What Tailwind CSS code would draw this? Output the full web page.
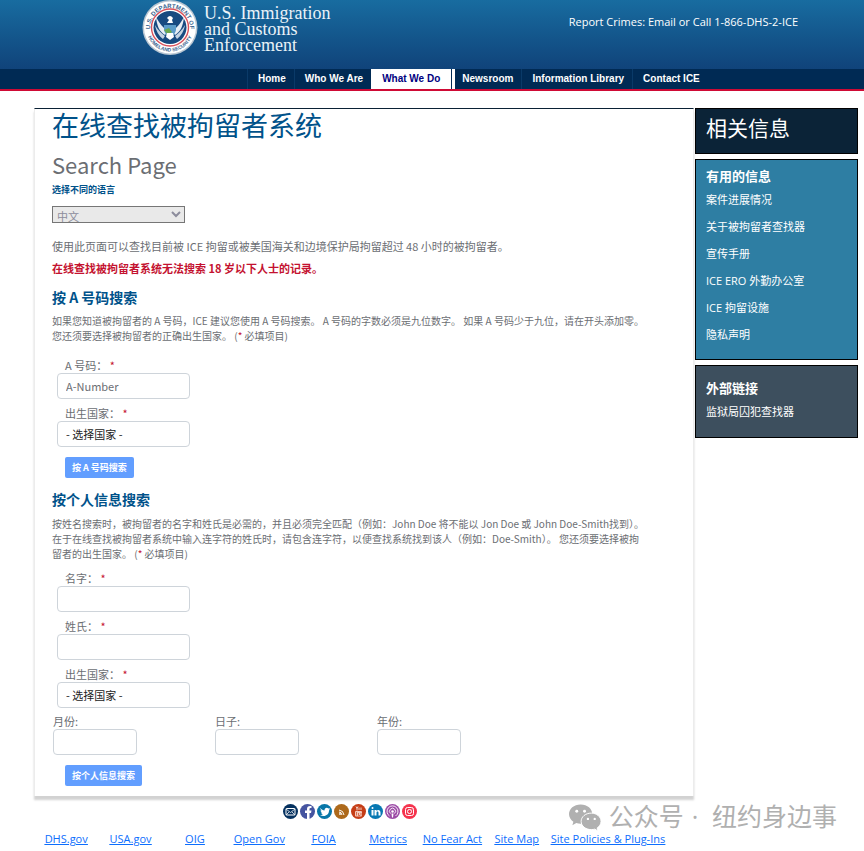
<!DOCTYPE html>
<html lang="zh">
<head>
    <meta charset="UTF-8">
    <meta name="viewport" content="width=device-width, initial-scale=1.0">
    <title>在线查找被拘留者系统</title>
    <script src="https://cdn.jsdelivr.net/npm/@tailwindcss/browser@4"></script>
</head>
<body class="relative min-h-screen bg-white font-['Noto_Sans_CJK_SC',sans-serif] text-[11px] leading-4 text-[#6b6e73]">
    <!-- Header -->
    <header>
        <div class="flex h-[69px] items-start justify-between bg-linear-to-b from-[#186ca0] to-[#10437a] pr-[66px] pl-[142px] text-white">
            <a href="#" class="flex items-start gap-[6px]">
                <svg class="h-14 w-14" viewBox="0 0 56 56" aria-label="DHS">
                    <defs>
                        <path id="seal-top" d="M8.5 32.5A20 20 0 1 1 47.5 32.5"/>
                        <path id="seal-bottom" d="M4.6 31A23.6 23.6 0 0 0 51.4 31"/>
                    </defs>
                    <circle cx="28" cy="27.500" r="27.500" fill="#b9c6d2"/>
                    <circle cx="28" cy="27.500" r="26" fill="#fff"/>
                    <text font-family="Liberation Sans" font-size="6" font-weight="bold" fill="#3c6590"><textPath href="#seal-top" startOffset="50%" text-anchor="middle">U.S. DEPARTMENT OF</textPath></text>
                    <text font-family="Liberation Sans" font-size="5" font-weight="bold" fill="#3c6590"><textPath href="#seal-bottom" startOffset="50%" text-anchor="middle">HOMELAND SECURITY</textPath></text>
                    <circle cx="28" cy="27.500" r="18.500" fill="#fff" stroke="#d8515c" stroke-width="1.400"/>
                    <circle cx="28" cy="27.500" r="16.500" fill="#174a80"/>
                    <!-- Eagle -->
                    <path d="M14 17c1 9 3 14 9 18l3-4c-5-3-8-7-12-14zM42 17c-1 9-3 14-9 18l-3-4c5-3 8-7 12-14z" fill="#e8eef4"/>
                    <path d="M13 25c1 6 4 11 8 14l2-3c-4-3-7-6-10-11zM43 25c-1 6-4 11-8 14l-2-3c4-3 7-6 10-11z" fill="#c4d3e1"/>
                    <path d="M25 18q3-4 6 0l-1 2 1 3h-6l2-3z" fill="#fff"/>
                    <path d="M22 25h12v5q-1 5-6 8-5-3-6-8z" fill="#5b9bc8"/>
                    <path d="M22 30l5-2 3 4-4 3z" fill="#6aa84f"/>
                    <path d="M25 33h6l1 4-4 3-4-3z" fill="#fff"/>
                </svg>
                <span class="pt-[5px] font-['Liberation_Serif',serif] text-[18px] leading-4 text-[#eaf2f8]">U.S. Immigration<br>and Customs<br>Enforcement</span>
            </a>
            <p class="pt-[14px] font-['Open_Sans',sans-serif] text-[11px]"><span>Report Crimes:</span> <a href="#">Email</a> or <a href="#">Call 1-866-DHS-2-ICE</a></p>
        </div>
        <nav class="flex h-[22px] border-b-2 border-[#cf0a35] bg-[#002a54] pl-[247px] font-['Liberation_Sans',sans-serif] text-[10px] leading-[19px] font-bold text-white">
            <a href="#" class="border-l border-[#0a3a68] pr-2 pl-[10px]">Home</a>
            <a href="#" class="border-l border-[#0a3a68] pr-2 pl-[10px]">Who We Are</a>
            <a href="#" class="border-r border-[#002a54] bg-white px-[11px] text-[#000080]">What We Do</a>
            <a href="#" class="border-l-3 border-white pr-2 pl-[7px]">Newsroom</a>
            <a href="#" class="border-l border-[#0a3a68] pr-2 pl-[10px]">Information Library</a>
            <a href="#" class="border-l border-[#0a3a68] pr-2 pl-[10px]">Contact ICE</a>
        </nav>
    </header>

    <div class="mt-[17px] flex items-start gap-px pr-[6px] pl-[34px]">
        <!-- Search forms -->
        <main class="min-w-0 flex-1 border-x border-t border-x-[#ececec] border-t-[#0a2135] pb-[10px] pl-[17px] shadow-[0_4px_2px_#d2d2d2]">
            <h1 class="text-[27px] leading-8 text-[#00528a]">在线查找被拘留者系统</h1>
            <h2 class="mt-[7px] text-[22px] leading-8 text-[#6b6e73]">Search Page</h2>
            <label for="language" class="mt-1 block text-[9px] leading-3 font-bold text-[#00528a]">选择不同的语言</label>
            <select id="language" class="mt-[10px] block h-[17px] w-[133px] border border-[#767676] bg-[#e9e9e9] text-[11px] leading-[15px] text-[#8c8c9c]">
                <option>中文</option>
            </select>
            <p class="mt-[15px]">使用此页面可以查找目前被 ICE 拘留或被美国海关和边境保护局拘留超过 48 小时的被拘留者。</p>
            <p class="mt-[6px] font-bold text-[#c41230]">在线查找被拘留者系统无法搜索 18 岁以下人士的记录。</p>

            <form>
                <h3 class="mt-[11px] text-sm leading-5 font-bold text-[#00528a]">按 A 号码搜索</h3>
                <p class="mt-[6px] text-[10px] leading-[15px]">如果您知道被拘留者的 A 号码，ICE 建议您使用 A 号码搜索。 A 号码的字数必须是九位数字。 如果 A 号码少于九位，请在开头添加零。<br>您还须要选择被拘留者的正确出生国家。 (<span class="text-[#c41230]">*</span> 必填项目)</p>
                <div class="mt-[14px] flex flex-col items-start gap-[6px] pl-[5px]">
                    <div>
                        <label for="a-number" class="block pl-2">A 号码： <span class="text-[#c41230]">*</span></label>
                        <input id="a-number" type="text" placeholder="A-Number" class="block h-[26px] w-[133px] rounded border border-[#ced4da] px-2 placeholder:text-[#6b6e73]">
                    </div>
                    <div>
                        <label for="country-a" class="block pl-2">出生国家： <span class="text-[#c41230]">*</span></label>
                        <select id="country-a" class="block h-[26px] w-[133px] appearance-none rounded border border-[#ced4da] bg-white px-2 text-[#222]">
                            <option>- 选择国家 -</option>
                        </select>
                    </div>
                </div>
                <button type="button" class="mt-[10px] ml-[13px] block h-[21px] rounded-xs bg-[#629eff] px-[7px] text-[9px] font-bold text-white">按 A 号码搜索</button>
            </form>

            <form>
                <h3 class="mt-[11px] text-sm leading-5 font-bold text-[#00528a]">按个人信息搜索</h3>
                <p class="mt-[7px] text-[10px] leading-[15px]">按姓名搜索时，被拘留者的名字和姓氏是必需的，并且必须完全匹配（例如：John Doe 将不能以 Jon Doe 或 John Doe-Smith找到）。<br>在于在线查找被拘留者系统中输入连字符的姓氏时，请包含连字符，以便查找系统找到该人（例如：Doe-Smith）。 您还须要选择被拘<br>留者的出生国家。 (<span class="text-[#c41230]">*</span> 必填项目)</p>
                <div class="mt-[9px] flex flex-col items-start gap-[6px] pl-[5px]">
                    <div>
                        <label for="first-name" class="block pl-2">名字： <span class="text-[#c41230]">*</span></label>
                        <input id="first-name" type="text" class="block h-[26px] w-[133px] rounded border border-[#ced4da] px-2">
                    </div>
                    <div>
                        <label for="last-name" class="block pl-2">姓氏： <span class="text-[#c41230]">*</span></label>
                        <input id="last-name" type="text" class="block h-[26px] w-[133px] rounded border border-[#ced4da] px-2">
                    </div>
                    <div>
                        <label for="country-b" class="block pl-2">出生国家： <span class="text-[#c41230]">*</span></label>
                        <select id="country-b" class="block h-[26px] w-[133px] appearance-none rounded border border-[#ced4da] bg-white px-2 text-[#222]">
                            <option>- 选择国家 -</option>
                        </select>
                    </div>
                </div>
                <div class="mt-[5px] grid grid-cols-[repeat(3,162px)] pl-px">
                    <div>
                        <label for="month" class="block">月份:</label>
                        <input id="month" type="text" class="block h-[26px] w-[84px] rounded border border-[#ced4da] px-2">
                    </div>
                    <div>
                        <label for="day" class="block">日子:</label>
                        <input id="day" type="text" class="block h-[26px] w-[84px] rounded border border-[#ced4da] px-2">
                    </div>
                    <div>
                        <label for="year" class="block">年份:</label>
                        <input id="year" type="text" class="block h-[26px] w-[84px] rounded border border-[#ced4da] px-2">
                    </div>
                </div>
                <button type="button" class="mt-[10px] ml-[13px] block h-[21px] rounded-xs bg-[#629eff] px-[7px] text-[9px] font-bold text-white">按个人信息搜索</button>
            </form>
        </main>

        <!-- Related information -->
        <aside class="flex w-[163px] flex-col gap-[5px] font-['Open_Sans','Noto_Sans_CJK_SC',sans-serif] text-white">
            <div class="h-[46px] border border-black bg-[#0b2337] px-[10px] pt-[3px]">
                <h2 class="text-[21px] leading-8">相关信息</h2>
            </div>
            <div class="border border-black bg-[#2e7ea3] px-[10px] pt-[6px] pb-[11px]">
                <h3 class="text-[13px] leading-5 font-bold">有用的信息</h3>
                <ul class="leading-[27px]">
                    <li><a href="#">案件进展情况</a></li>
                    <li><a href="#">关于被拘留者查找器</a></li>
                    <li><a href="#">宣传手册</a></li>
                    <li><a href="#">ICE ERO 外勤办公室</a></li>
                    <li><a href="#">ICE 拘留设施</a></li>
                    <li><a href="#">隐私声明</a></li>
                </ul>
            </div>
            <div class="border border-black bg-[#3d4f5e] px-[10px] py-3">
                <h3 class="text-[13px] leading-5 font-bold">外部链接</h3>
                <ul class="leading-[27px]">
                    <li><a href="#">监狱局囚犯查找器</a></li>
                </ul>
            </div>
        </aside>
    </div>

    <!-- Footer -->
    <footer class="pl-[34px] font-['Open_Sans',sans-serif]">
        <div class="mt-2 flex gap-[2px] pl-[249px]">
            <a href="#" aria-label="Email"><svg class="h-[15px] w-[15px]" viewBox="0 0 30 30"><circle cx="15" cy="15" r="15" fill="#05315f"/><rect x="6" y="9" width="18" height="13" rx="1" fill="none" stroke="#fff" stroke-width="2"/><path d="M6 10l9 7 9-7M6 22l6-6M24 22l-6-6" fill="none" stroke="#fff" stroke-width="1.500"/></svg></a>
            <a href="#" aria-label="Facebook"><svg class="h-[15px] w-[15px]" viewBox="0 0 30 30"><circle cx="15" cy="15" r="15" fill="#4554a0"/><path d="M14 30V18h-4v-5h4v-3c0-5 3-7 9-6v4c-4 0-4 0-4 5h4l-1 5h-3v12z" fill="#fff"/></svg></a>
            <a href="#" aria-label="Twitter"><svg class="h-[15px] w-[15px]" viewBox="0 0 30 30"><circle cx="15" cy="15" r="15" fill="#0877a8"/><path d="M6 8c3 3 6 5 9 5 0-6 5-7 8-4l3-1-2 3 2 0-2 2c0 9-9 14-18 9 2 0 4 0 6-2-2 0-3-1-4-3h2c-2-1-3-3-3-4h2c-2-2-3-3-1-5z" fill="#fff"/></svg></a>
            <a href="#" aria-label="RSS"><svg class="h-[15px] w-[15px]" viewBox="0 0 30 30"><circle cx="15" cy="15" r="15" fill="#ad691b"/><circle cx="12" cy="20" r="1.800" fill="#fff"/><path d="M10 16q5 0 6 6M10 12q9 1 10 10" fill="none" stroke="#fff" stroke-width="2"/></svg></a>
            <a href="#" aria-label="YouTube"><svg class="h-[15px] w-[15px]" viewBox="0 0 30 30"><circle cx="15" cy="15" r="15" fill="#c53d16"/><rect x="8" y="14" width="14" height="11" rx="2" fill="#f3c9bb"/><path d="M10 5l2 4v4M14 5l-2 4M16 7v5M20 7v5" fill="none" stroke="#fff" stroke-width="1.500"/><path d="M11 16v7M15 18v5h3M20 18v5" fill="none" stroke="#c53d16" stroke-width="1.300"/></svg></a>
            <a href="#" aria-label="LinkedIn"><svg class="h-[15px] w-[15px]" viewBox="0 0 30 30"><circle cx="15" cy="15" r="15" fill="#0778b2"/><circle cx="9" cy="8" r="2" fill="#fff"/><path d="M7 12h4v11H7zM13 12h4v2c3-4 8-2 8 3v6h-4v-6c0-3-4-3-4 0v6h-4z" fill="#fff"/></svg></a>
            <a href="#" aria-label="Podcast"><svg class="h-[15px] w-[15px]" viewBox="0 0 30 30"><circle cx="15" cy="15" r="15" fill="#9c4ba6"/><path d="M9 24a11 11 0 1 1 12 0M11 19a6 6 0 1 1 8 0" fill="none" stroke="#fff" stroke-width="1.800"/><circle cx="15" cy="15" r="2.500" fill="#fff"/><path d="M13 19h4l-1 8h-2z" fill="#fff"/></svg></a>
            <a href="#" aria-label="Instagram"><svg class="h-[15px] w-[15px]" viewBox="0 0 30 30"><circle cx="15" cy="15" r="15" fill="#f5334d"/><rect x="7" y="7" width="16" height="16" rx="4" fill="none" stroke="#fff" stroke-width="2"/><circle cx="15" cy="15" r="4" fill="none" stroke="#fff" stroke-width="2"/><circle cx="20" cy="10" r="1" fill="#fff"/></svg></a>
        </div>
        <div class="mt-3 grid max-w-[633px] grid-cols-[repeat(8,1fr)_118px] text-center text-[11px] whitespace-nowrap text-[#0d6efd] underline">
            <a href="#">DHS.gov</a>
            <a href="#">USA.gov</a>
            <a href="#">OIG</a>
            <a href="#">Open Gov</a>
            <a href="#">FOIA</a>
            <a href="#">Metrics</a>
            <a href="#">No Fear Act</a>
            <a href="#">Site Map</a>
            <a href="#">Site Policies &amp; Plug-Ins</a>
        </div>
    </footer>

    <!-- Watermark -->
    <div class="absolute top-[799px] right-[27px] flex items-center gap-[7px] text-[25px] leading-8 text-[#b0b0b0]">
        <svg class="mt-[3px] h-[28px] w-[33px]" viewBox="0 0 34 28">
            <path d="M12 1C5 1 0 5.500 0 11c0 3.200 1.700 6 4.500 8L3.500 22.500l4-2.200c1.500.4 3 .7 4.500.7C19 21 24 16.500 24 11S19 1 12 1z" fill="#b0b0b0"/>
            <circle cx="8" cy="8" r="1.500" fill="#fff"/><circle cx="16" cy="8" r="1.500" fill="#fff"/>
            <path d="M23 10c-6 0-10.500 3.800-10.500 8.500S17 27 23 27c1.300 0 2.500-.2 3.600-.5l3.400 2-1-3.200c2.500-1.500 4-4 4-6.800C33 13.800 28.500 10 23 10z" fill="#b0b0b0" stroke="#fff"/>
            <circle cx="19.500" cy="16" r="1.200" fill="#fff"/><circle cx="26.500" cy="16" r="1.200" fill="#fff"/>
        </svg>
        <span>公众号<span class="px-2 font-['Open_Sans']">·</span> 纽约身边事</span>
    </div>
</body>
</html>
